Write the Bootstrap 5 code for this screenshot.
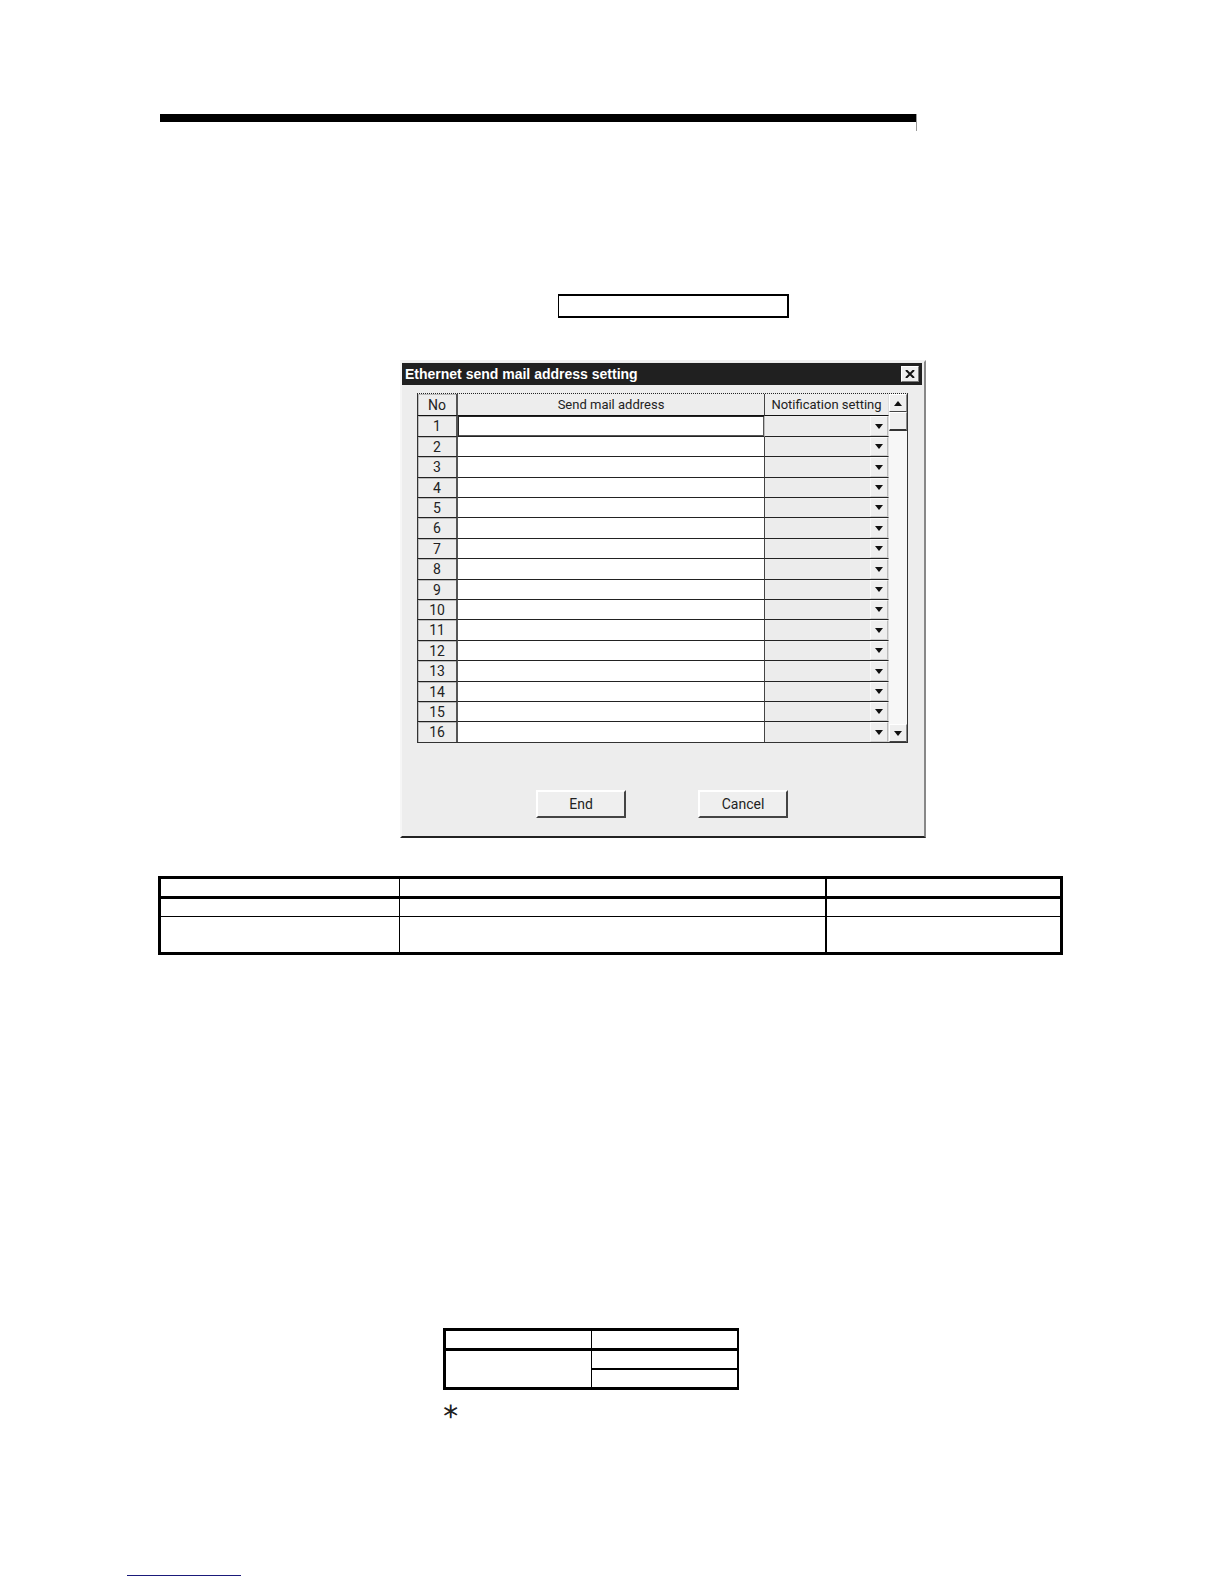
<!DOCTYPE html>
<html lang="en">
<head>
<meta charset="utf-8">
<meta name="viewport" content="width=device-width, initial-scale=1">
<title>Ethernet send mail address setting</title>
<link href="https://cdn.jsdelivr.net/npm/bootstrap@5.3.0/dist/css/bootstrap.min.css" rel="stylesheet">
<style>
body { background: #fff; color: #000; font-family: "Liberation Sans", Arial, sans-serif; }
.manual-page { padding: 114px 161px 8px 158px; }
.top-rule { height: 17px; max-width: 757px; margin-left: 2px; border-right: 1px solid #999; }
.top-rule::before { content: ""; display: block; height: 8px; background: #000; }
.name-box { width: 231px; height: 24px; margin: 163px 0 42px 400px; border: 2px solid #000; border-left-width: 1px; }
.dialog-win { max-width: 526px; margin-left: 242px; background: #ededed; border: 2px solid #f6f6f6; border-top-color: #f0f0f0; border-right-color: #888; border-bottom-color: #222; font-family: Roboto, "Liberation Sans", sans-serif; font-size: 13px; line-height: 20px; color: #222; padding-top: 1px; }
.title-strip { height: 22px; margin-right: 2px; padding: 0 3px; background: #202020; color: #fff; }
.title-strip h1 { font: bold 14px/20px "Liberation Sans", Arial, sans-serif; }
.close-btn { width: 18px; height: 16px; background: #eee; border: 1px solid #fff; border-right-color: #777; border-bottom-color: #777; }
.grid-wrap { margin: 8px 16px 0 15px; border: 1px solid #333; border-top: 1px dotted #222; }
.mail-grid { width: 100%; border-collapse: separate; border-spacing: 0; table-layout: fixed; }
.mail-grid th { font-weight: 400; text-align: center; padding: 0; background: #ededed; white-space: nowrap; }
.mail-grid th, .mail-grid td { border-right: 1px solid #444; border-bottom: 1px solid #222; padding: 0; line-height: 18px; }
.mail-grid th:first-child { border-right: 2px solid #555; box-shadow: inset 1px 1px #bbb; font-size: 14px; }
.mail-grid tr > :last-child { border-right-color: #ddd; }
.mail-grid thead tr { height: 22px; }
.mail-grid thead th { border-bottom-color: #111; }
.mail-grid tbody tr { height: 20px; }
.mail-grid tbody tr:nth-child(5n+1), .mail-grid tbody tr:nth-child(5n+3) { height: 21px; }
.mail-grid tbody tr:last-child { height: 20px; }
.mail-grid tbody tr:last-child > * { border-bottom: 0; }
.mail-grid td { position: relative; background: #fff; }
.mail-grid td:last-child { background: #ececec; }
.col-no { width: 40px; }
.col-set { width: 124px; }
.mail-grid input, .mail-grid select { display: block; width: 100%; height: 18px; padding: 0 4px; border: 0; border-radius: 0; background: transparent; appearance: none; font: inherit; }
.mail-grid tbody tr:first-child td:nth-child(2) { box-shadow: inset 1px 1px #222, inset -1px -1px #555; border-right-color: #bbb; }
.drop-mark { position: absolute; right: 0; top: 0; bottom: 0; width: 18px; background: #efefef; border: 1px solid #fafafa; border-right-color: #bbb; border-bottom-color: #ccc; pointer-events: none; }
.scroll-col { width: 18px; background: #f7f7f7; }
.scroll-btn { height: 18px; background: #efefef; border: 1px solid #fff; border-right-color: #888; border-bottom-color: #444; }
.scroll-thumb { height: 19px; background: #efefef; border: 1px solid #fff; border-right-color: #888; border-bottom: 2px solid #333; }
.dialog-actions { gap: 72px; padding: 47px 0 18px 134px; }
.push-btn { width: 90px; height: 28px; background: #efefef; border: 2px solid #fff; border-right-color: #444; border-bottom-color: #444; border-radius: 0; color: #222; font-size: 14px; }
.ruled { border-collapse: separate; border-spacing: 0; table-layout: fixed; border: 3px solid #000; width: 100%; }
.ruled th, .ruled td { padding: 0; border: 0 solid #000; }
.ruled th { border-bottom-width: 3px; height: 20px; }
.spec-table { margin-top: 38px; }
.spec-table tr > :nth-child(1) { border-right-width: 1px; }
.spec-table tr > :nth-child(2) { border-right-width: 2px; }
.spec-table td { height: 17px; border-bottom-width: 1px; }
.spec-table tbody tr:first-child td { height: 18px; }
.spec-table tbody tr:last-child td { height: 35px; border-bottom-width: 0; }
.value-table { margin: 373px 0 0 285px; max-width: 296px; border-right-width: 2px; }
.value-table tr > :first-child:not(.sub-cell) { border-right-width: 1px; }
.value-table td { height: 17px; }
.value-table .rule-cell { height: 19px; border-bottom-width: 2px; }
.note-mark { margin: 9px 0 0 284px; font: 200 28px/24px "DejaVu Sans Light", "DejaVu Sans", sans-serif; -webkit-text-stroke: 1px #222; }
.foot-link { display: block; width: 114px; height: 24px; margin: 129px 0 0 -31px; border-bottom: 1px solid #1a1a7a; }
</style>
</head>
<body>
<main class="manual-page">
  <div class="top-rule"></div>
  <div class="name-box"></div>

  <section class="dialog-win" aria-labelledby="dlgTitle">
    <header class="title-strip d-flex align-items-center justify-content-between">
      <h1 id="dlgTitle" class="m-0 text-nowrap">Ethernet send mail address setting</h1>
      <button type="button" class="close-btn p-0 d-flex align-items-center justify-content-center" aria-label="Close">
        <svg width="10" height="8" viewBox="0 0 10 8"><path d="M1 0l8 8M9 0L1 8" stroke="#111" stroke-width="2" fill="none"/></svg>
      </button>
    </header>
    <div class="grid-wrap d-flex">
      <div class="flex-grow-1">
        <table class="mail-grid">
          <colgroup><col class="col-no"><col><col class="col-set"></colgroup>
          <thead><tr><th scope="col">No</th><th scope="col">Send mail address</th><th scope="col">Notification setting</th></tr></thead>
          <tbody id="mailRows"></tbody>
        </table>
      </div>
      <div class="scroll-col d-flex flex-column flex-shrink-0">
        <button type="button" class="scroll-btn p-0 d-flex align-items-center justify-content-center" aria-label="Scroll up"><svg width="8" height="5" viewBox="0 0 8 5"><path d="M0 5h8L4 0z" fill="#111"/></svg></button>
        <div class="scroll-thumb"></div>
        <button type="button" class="scroll-btn p-0 mt-auto d-flex align-items-center justify-content-center" aria-label="Scroll down"><svg width="8" height="5" viewBox="0 0 8 5"><path d="M0 0h8L4 5z" fill="#111"/></svg></button>
      </div>
    </div>
    <div class="dialog-actions d-flex">
      <button type="button" class="push-btn p-0">End</button>
      <button type="button" class="push-btn p-0">Cancel</button>
    </div>
  </section>

  <table class="ruled spec-table">
    <colgroup><col style="width:26.6%"><col style="width:47.5%"><col></colgroup>
    <thead><tr><th></th><th></th><th></th></tr></thead>
    <tbody><tr><td></td><td></td><td></td></tr><tr><td></td><td></td><td></td></tr></tbody>
  </table>

  <table class="ruled value-table">
    <thead><tr><th></th><th></th></tr></thead>
    <tbody><tr><td rowspan="2"></td><td class="rule-cell"></td></tr><tr><td class="sub-cell"></td></tr></tbody>
  </table>
  <p class="note-mark">∗</p>
  <a class="foot-link" href="#" aria-label="Manual link"></a>
</main>
<script src="https://cdn.jsdelivr.net/npm/bootstrap@5.3.0/dist/js/bootstrap.bundle.min.js"></script>
<script>
const rows = document.getElementById('mailRows');
for (let n = 1; n <= 16; n++) {
  rows.insertAdjacentHTML('beforeend', `<tr><th scope="row">${n}</th>
    <td><input type="email" aria-label="Send mail address ${n}"></td>
    <td><select aria-label="Notification setting ${n}"><option></option></select>
    <span class="drop-mark d-flex align-items-center justify-content-center"><svg width="8" height="5" viewBox="0 0 8 5"><path d="M0 0h8L4 5z" fill="#111"/></svg></span></td></tr>`);
}
</script>
</body>
</html>
